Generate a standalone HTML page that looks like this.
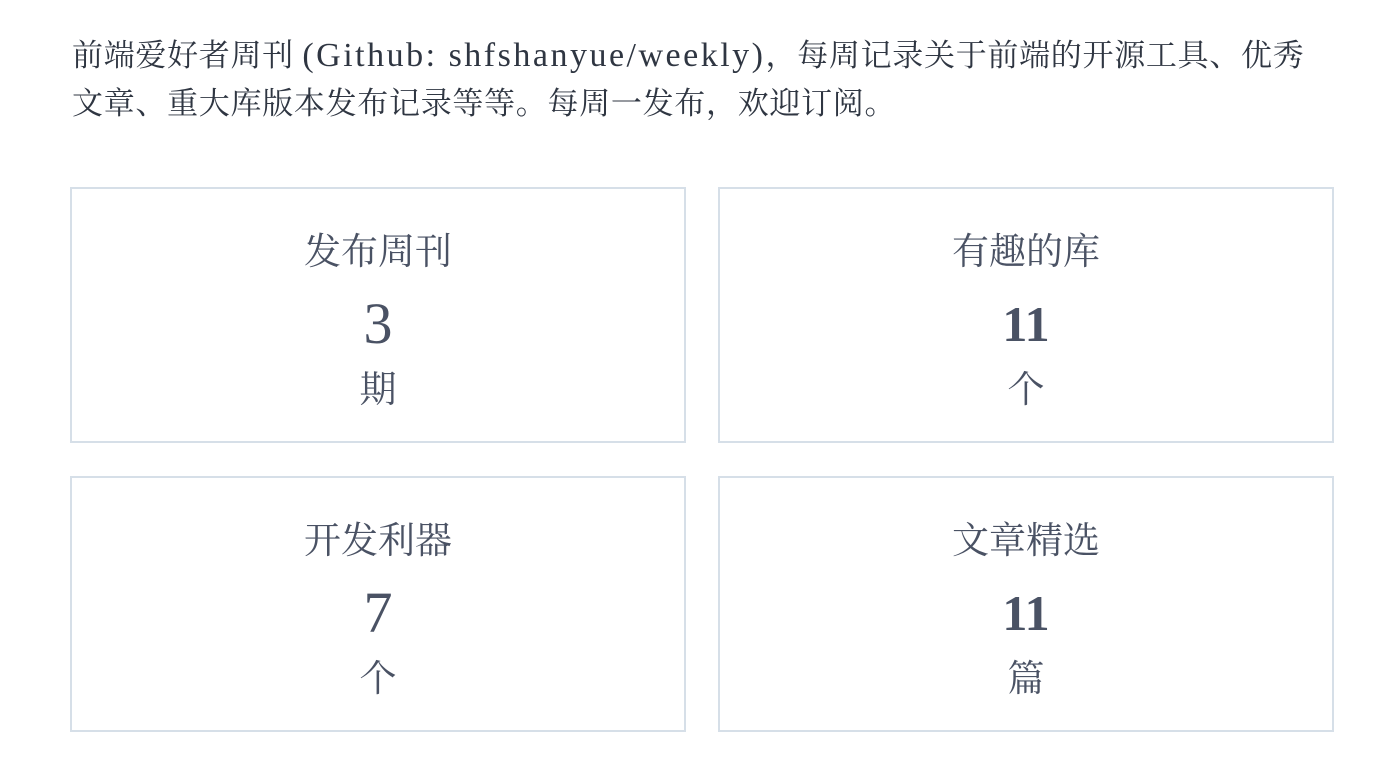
<!DOCTYPE html>
<html><head><meta charset="utf-8"><style>
body{margin:0;background:#fff;width:1384px;height:782px;overflow:hidden;font-family:"Liberation Serif","Noto Serif CJK SC",serif;}
p{position:absolute;left:72px;top:32px;margin:0;font-size:31px;line-height:48px;color:#2f3642;white-space:nowrap;letter-spacing:0.7px;}
.l{font-size:34px;letter-spacing:2.5px;}
.box{position:absolute;width:612px;height:252px;border:2px solid #d6dfe8;text-align:center;color:#4a5264;}
.t{position:absolute;left:0;right:0;top:42px;font-size:37px;line-height:44px;}
.n{position:absolute;left:0;right:0;top:102px;font-size:58px;line-height:66px;}
.u{position:absolute;left:0;right:0;top:180px;font-size:37px;line-height:44px;}
</style></head><body>
<p>前端爱好者周刊 <span class="l">(Github: shfshanyue/weekly)</span>，每周记录关于前端的开源工具、优秀<br>文章、重大库版本发布记录等等。每周一发布，欢迎订阅。</p>
<div class="box" style="left:70px;top:187px"><div class="t">发布周刊</div><div class="n">3</div><div class="u">期</div></div>
<div class="box" style="left:718px;top:187px"><div class="t">有趣的库</div><div class="n" style="font-weight:bold;font-size:50px">11</div><div class="u">个</div></div>
<div class="box" style="left:70px;top:476px"><div class="t">开发利器</div><div class="n">7</div><div class="u">个</div></div>
<div class="box" style="left:718px;top:476px"><div class="t">文章精选</div><div class="n" style="font-weight:bold;font-size:50px">11</div><div class="u">篇</div></div>
</body></html>
